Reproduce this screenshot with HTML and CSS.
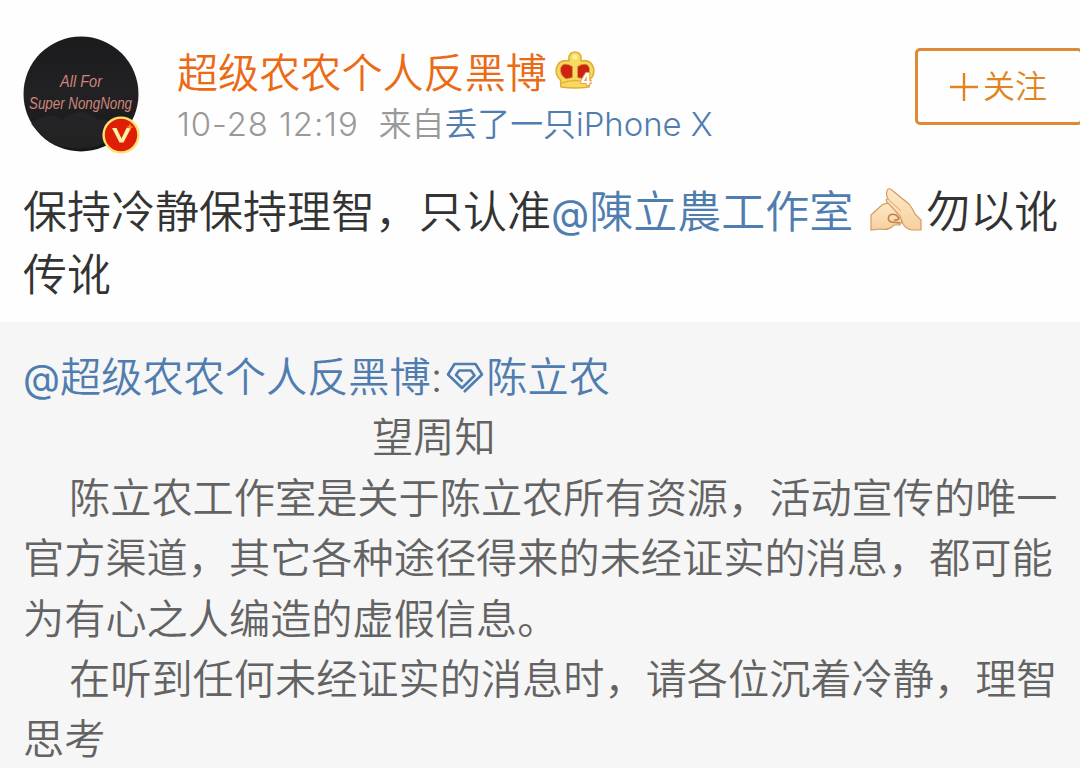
FILE: index.html
```
<!DOCTYPE html>
<html lang="zh-CN">
<head>
    <meta charset="UTF-8">
    <meta name="viewport" content="width=device-width, initial-scale=1.0">
    <title>微博正文</title>
    <link rel="stylesheet" href="styles.css">
</head>
<body>

<div class="post">
    <div class="header">
        <div class="avatar">
            <svg class="avatar-pic" viewBox="0 0 116 116">
                <defs>
                    <linearGradient id="night" x1="0" y1="0" x2="0" y2="1">
                        <stop offset="0" stop-color="#1b1b1d"/>
                        <stop offset="0.5" stop-color="#222224"/>
                        <stop offset="1" stop-color="#161617"/>
                    </linearGradient>
                </defs>
                <circle cx="58" cy="58" r="57.5" fill="url(#night)"/>
                <path d="M8 88Q24 74 40 84Q58 68 74 84Q88 80 96 100Q60 122 26 106Z" fill="#29292b" opacity="0.6"/>
                <g class="avatar-text">
                    <text x="37" y="51" textLength="42" lengthAdjust="spacingAndGlyphs">All For</text>
                    <text x="6" y="73" textLength="103" lengthAdjust="spacingAndGlyphs">Super NongNong</text>
                </g>
            </svg>
            <svg class="badge" viewBox="0 0 40 40">
                <circle cx="20" cy="20" r="18.6" fill="#fde36b"/>
                <circle cx="20" cy="20" r="16.2" fill="#de1f06"/>
                <path d="M11 13h4.500l5 10.500 5-10.500h4.500L22.500 27.500h-4Z" fill="#fff0a8"/>
                <path d="M29 8l1 3 3 1-3 1-1 3-1-3-3-1 3-1Z" fill="#f9a03a" opacity="0.8"/>
            </svg>
        </div>
        <div class="info">
            <div class="name">
                <span>超级农农个人反黑博</span>
                <svg class="crown" viewBox="0 0 40 42">
                    <path d="M6 38L5.500 31Q0 26 1.500 19Q4 10 14 12Q13 3 20 3Q27 3 26 12Q36 10 38.500 19Q40 26 34.500 31L34 38Q20 40 6 38Z" fill="#f7da62" stroke="#e2ae35" stroke-width="1.600" stroke-linejoin="round"/>
                    <path d="M17.500 17.500Q8 12 5.500 19Q4.500 26 11 30L17.500 28.500Z" fill="#cb2411" stroke="#dfa02e" stroke-width="0.800"/>
                    <path d="M22.500 17.500Q32 12 34.500 19Q35.500 26 29 30L22.500 28.500Z" fill="#cb2411" stroke="#dfa02e" stroke-width="0.800"/>
                    <path d="M7 34Q20 29 33 34" fill="none" stroke="#e5b138" stroke-width="1.400"/>
                    <circle cx="20" cy="8" r="2.600" fill="#fdf0a0"/>
                    <text class="crown-level" x="25.500" y="36">4</text>
                </svg>
            </div>
            <div class="meta">
                <span class="time">10-28 12:19</span>
                <span class="from">来自<a class="link">丢了一只<span class="device">iPhone X</span></a></span>
            </div>
        </div>
        <div class="follow">
            <svg class="plus" viewBox="0 0 28 28">
                <path d="M0 14H28M14 0V28" fill="none" stroke="#e08421" stroke-width="2.4"/>
            </svg>
            <span>关注</span>
        </div>
    </div>

    <div class="content">
        <div class="line">保持冷静保持理智，只认准<a class="link"><span class="at">@</span>陳立農工作室</a><svg class="hands" viewBox="0 0 52 44">
                <defs>
                    <linearGradient id="skin" x1="0" y1="0" x2="0" y2="1">
                        <stop offset="0" stop-color="#fee9c8"/>
                        <stop offset="1" stop-color="#f6cf9f"/>
                    </linearGradient>
                </defs>
                <path d="M1 27L12 17Q17 14 23 16L32 22Q36 28 30 37L24 37Q18 43 11 41L1 42Z" fill="url(#skin)" stroke="#d59a60" stroke-width="1.200"/>
                <path d="M19 28Q21 25 26 27L29 30Q28 33 24 32M19 28Q17 32 21 34L30 35" fill="none" stroke="#bd8047" stroke-width="1.500"/>
                <path d="M18 1Q20 0 23 3L39 16Q43 21 45 26L51 32V42H42Q36 41 33 36L30 28L17 14Q15 11 18 11Q15 5 18 1Z" fill="url(#skin)" stroke="#d59a60" stroke-width="1.200"/>
                <path d="M18 11L31 23" fill="none" stroke="#dca066" stroke-width="1"/>
            </svg>勿以讹</div>
        <div class="line">传讹</div>
    </div>

    <div class="quote">
        <div class="line"><a class="link"><span class="at">@</span>超级农农个人反黑博</a><span class="colon">:</span><a class="link"><svg class="gem" viewBox="0 0 38 32">
                <path d="M18 30L36 12.500L29.500 2H8.500L2 12.500L16 26L28.500 13.500L25 8.500H13L10 13L16.500 19.500" fill="none" stroke="#507daf" stroke-width="2.600" stroke-linejoin="round"/>
            </svg>陈立农</a></div>
        <div class="line center">望周知</div>
        <div class="line indent">陈立农工作室是关于陈立农所有资源，活动宣传的唯一</div>
        <div class="line">官方渠道，其它各种途径得来的未经证实的消息，都可能</div>
        <div class="line">为有心之人编造的虚假信息。</div>
        <div class="line indent">在听到任何未经证实的消息时，请各位沉着冷静，理智</div>
        <div class="line">思考</div>
    </div>
</div>

</body>
</html>
```
FILE: styles.css
```
body {
    margin: 0;
    background-color: #fefefe;
    font-family: Inter, "Noto Sans CJK SC", sans-serif;
    font-weight: 350;
    color: #333;
    overflow: hidden;
}
.post {
    width: 1080px;
    height: 768px;
    display: flex;
    flex-direction: column;
    overflow: hidden;
}
.header {
    display: flex;
    flex-shrink: 0;
    height: 181px;
    box-sizing: border-box;
    padding: 36px 0 0 23px;
}
.avatar {
    position: relative;
    width: 116px;
    height: 116px;
}
.avatar-pic {
    display: block;
    width: 116px;
    height: 116px;
}
.avatar-text {
    fill: #cf857c;
    font-family: "Liberation Sans", cursive;
    font-size: 17px;
    font-style: italic;
}
.badge {
    position: absolute;
    left: 78px;
    top: 79px;
    width: 40px;
    height: 40px;
}
.info {
    margin-left: 38px;
    flex: 1;
}
.name {
    display: flex;
    align-items: center;
    height: 67px;
    font-size: 41.1px;
    color: #eb6a15;
}
.crown {
    width: 40px;
    height: 42px;
    margin: 1px 0 0 8px;
}
.crown-level {
    font-size: 16px;
    font-weight: 700;
    fill: #fff;
    stroke: #e9a04a;
    stroke-width: 2px;
    paint-order: stroke;
}
.meta {
    display: flex;
    gap: 20px;
    height: 42px;
    line-height: 42px;
    font-size: 32.9px;
    color: #999;
    white-space: nowrap;
}
.time {
    letter-spacing: 0.9px;
}
.link {
    color: #507daf;
}
.follow {
    display: flex;
    align-items: center;
    box-sizing: border-box;
    width: 168px;
    height: 77px;
    margin: 12px -3px 0 0;
    padding-left: 32px;
    border: 3px solid #dc8a35;
    border-radius: 5px;
    font-size: 32px;
    line-height: 40px;
    color: #e08421;
}
.plus {
    width: 28px;
    height: 28px;
    margin-right: 5px;
}
.line {
    white-space: nowrap;
}
.content {
    flex-shrink: 0;
    height: 141px;
    box-sizing: border-box;
    padding-left: 23px;
    font-size: 44px;
}
.content .line {
    height: 63px;
    line-height: 63px;
}
.at {
    font-size: 0.93em;
    font-weight: 400;
}
.content .at {
    font-size: 0.9em;
}
.hands {
    width: 52px;
    height: 44px;
    margin: 0 4px 0 17px;
    vertical-align: -4px;
}
.quote {
    flex: 1;
    box-sizing: border-box;
    padding: 25px 0 0 23px;
    background-color: #f6f6f6;
    font-size: 41.2px;
    color: #636363;
}
.quote .line {
    height: 60.4px;
    line-height: 60.4px;
}
.quote .center {
    padding-left: 349px;
}
.quote .indent {
    padding-left: 46px;
}
.gem {
    width: 38px;
    height: 32px;
    margin: 0 2px 0 4px;
    vertical-align: -2px;
}
```
